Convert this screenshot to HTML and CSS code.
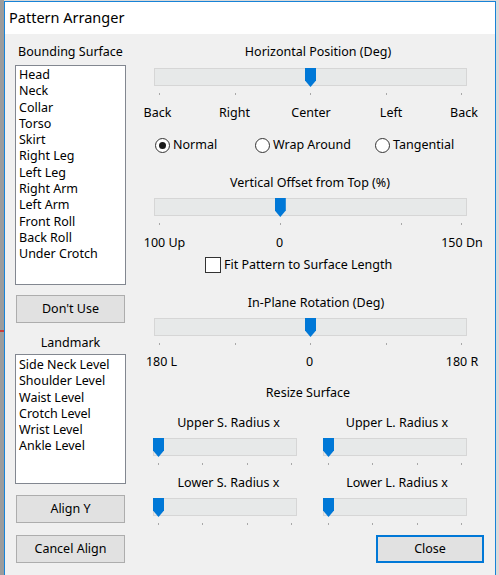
FILE: index.html
```html
<!DOCTYPE html>
<html>
<head>
<meta charset="utf-8">
<title>Pattern Arranger</title>
<link rel="stylesheet" href="styles.css">
</head>
<body>
<div class="window">
  <div class="titlebar">Pattern Arranger</div>
  <div class="content">
    <div class="left">
      <div class="cap cap-surface">Bounding Surface</div>
      <ul class="list list-surface">
        <li>Head</li>
        <li>Neck</li>
        <li>Collar</li>
        <li>Torso</li>
        <li>Skirt</li>
        <li>Right Leg</li>
        <li>Left Leg</li>
        <li>Right Arm</li>
        <li>Left Arm</li>
        <li>Front Roll</li>
        <li>Back Roll</li>
        <li>Under Crotch</li>
      </ul>
      <button class="btn btn-dontuse">Don't Use</button>
      <div class="cap cap-landmark">Landmark</div>
      <ul class="list list-landmark">
        <li>Side Neck Level</li>
        <li>Shoulder Level</li>
        <li>Waist Level</li>
        <li>Crotch Level</li>
        <li>Wrist Level</li>
        <li>Ankle Level</li>
      </ul>
      <button class="btn btn-align">Align Y</button>
      <button class="btn btn-cancel">Cancel Align</button>
    </div>

    <div class="right">
      <div class="title t-horiz">Horizontal Position (Deg)</div>
      <div class="slider big s-horiz" style="--p:0.5">
        <div class="track"></div>
        <div class="thumb"></div>
        <div class="ticks">
          <i style="--t:0"></i><i style="--t:0.25"></i><i style="--t:0.5"></i><i style="--t:0.75"></i><i style="--t:1"></i>
        </div>
      </div>
      <div class="scale sc-horiz">
        <span class="lbl">Back</span><span class="sp" style="flex-grow:0.251"></span>
        <span class="lbl">Right</span><span class="sp" style="flex-grow:0.250"></span>
        <span class="lbl">Center</span><span class="sp" style="flex-grow:0.261"></span>
        <span class="lbl">Left</span><span class="sp" style="flex-grow:0.238"></span>
        <span class="lbl">Back</span>
      </div>
      <div class="radios">
        <label class="radio"><span class="circle on"></span>Normal</label>
        <label class="radio"><span class="circle"></span>Wrap Around</label>
        <label class="radio"><span class="circle"></span>Tangential</label>
      </div>

      <div class="title t-vert">Vertical Offset from Top (%)</div>
      <div class="slider big s-vert" style="--p:0.4">
        <div class="track"></div>
        <div class="thumb"></div>
        <div class="ticks">
          <i style="--t:0"></i><i style="--t:0.4"></i><i style="--t:0.8"></i><i style="--t:1"></i>
        </div>
      </div>
      <div class="scale sc-vert">
        <span class="lbl">100 Up</span><span class="sp" style="flex-grow:0.3866"></span>
        <span class="lbl">0</span><span class="sp" style="flex-grow:0.6134"></span>
        <span class="lbl">150 Dn</span>
      </div>
      <label class="check"><span class="box"></span>Fit Pattern to Surface Length</label>

      <div class="title t-rot">In-Plane Rotation (Deg)</div>
      <div class="slider big s-rot" style="--p:0.5">
        <div class="track"></div>
        <div class="thumb"></div>
        <div class="ticks">
          <i style="--t:0"></i><i style="--t:0.25"></i><i style="--t:0.5"></i><i style="--t:0.75"></i><i style="--t:1"></i>
        </div>
      </div>
      <div class="scale sc-rot">
        <span class="lbl">180 L</span><span class="sp" style="flex-grow:0.4925"></span>
        <span class="lbl">0</span><span class="sp" style="flex-grow:0.5075"></span>
        <span class="lbl">180 R</span>
      </div>

      <div class="title t-resize">Resize Surface</div>
      <div class="pair pair-upper">
        <div class="cell">
          <div class="sub sub-s">Upper S. Radius x</div>
          <div class="slider small" style="--p:0">
            <div class="track"></div>
            <div class="thumb"></div>
            <div class="ticks"><i style="--t:0"></i><i style="--t:0.3333"></i><i style="--t:0.6667"></i><i style="--t:1"></i></div>
          </div>
        </div>
        <div class="cell">
          <div class="sub sub-l">Upper L. Radius x</div>
          <div class="slider small" style="--p:0">
            <div class="track"></div>
            <div class="thumb"></div>
            <div class="ticks"><i style="--t:0"></i><i style="--t:0.3333"></i><i style="--t:0.6667"></i><i style="--t:1"></i></div>
          </div>
        </div>
      </div>
      <div class="pair pair-lower">
        <div class="cell">
          <div class="sub sub-s">Lower S. Radius x</div>
          <div class="slider small" style="--p:0">
            <div class="track"></div>
            <div class="thumb"></div>
            <div class="ticks"><i style="--t:0"></i><i style="--t:0.3333"></i><i style="--t:0.6667"></i><i style="--t:1"></i></div>
          </div>
        </div>
        <div class="cell">
          <div class="sub sub-l">Lower L. Radius x</div>
          <div class="slider small" style="--p:0">
            <div class="track"></div>
            <div class="thumb"></div>
            <div class="ticks"><i style="--t:0"></i><i style="--t:0.3333"></i><i style="--t:0.6667"></i><i style="--t:1"></i></div>
          </div>
        </div>
      </div>
      <button class="btn btn-close">Close</button>
    </div>
  </div>
</div>
</body>
</html>
```

FILE: styles.css
```css
* { box-sizing: border-box; }

html, body {
  margin: 0;
  height: 575px;
  overflow: hidden;
}

body {
  padding: 1px 3px 0 4px;
  background:
    linear-gradient(#c9403c, #c9403c) 0 330px / 4px 2px no-repeat,
    linear-gradient(to right, #9c9c9c 0 4px, #dadada 4px);
  font-family: "Noto Sans", "Open Sans", sans-serif;
  font-size: 12.5px;
  color: #000;
}

.window {
  width: 492px;
  height: 580px;
  border: 1px solid #1883d7;
  background: #f0f0f0;
  display: flex;
  flex-direction: column;
}

.titlebar {
  height: 32px;
  flex: none;
  background: #fff;
  padding-left: 4px;
  font-size: 14.5px;
  line-height: 31px;
}

.content {
  display: flex;
  padding-left: 10px;
}

/* ---------- left column ---------- */
.left {
  width: 111px;
  display: flex;
  flex-direction: column;
}

.cap {
  line-height: 16px;
  height: 16px;
  text-align: center;
  white-space: nowrap;
}
.cap-surface { margin-top: 10px; }
.cap-landmark { margin-top: 12px; }

.list {
  list-style: none;
  margin: 0;
  padding: 1px 0 0 3px;
  background: #fff;
  border: 1px solid #828790;
  line-height: 16.3px;
  white-space: nowrap;
}
.list-surface { margin-top: 5px; height: 220px; }
.list-landmark { margin-top: 3px; height: 130px; padding-top: 2px; }

.btn {
  font: inherit;
  color: #000;
  background: #e1e1e1;
  border: 1px solid #adadad;
  height: 28px;
  padding: 0;
  line-height: 16px;
}
.left .btn { margin-left: 1px; width: 109px; }
.btn-dontuse { margin-top: 10px; }
.btn-align { margin-top: 11px; }
.btn-cancel { margin-top: 12px; }

/* ---------- right column ---------- */
.right {
  width: 332px;
  margin-left: 27px;
  display: flex;
  flex-direction: column;
}

.title {
  width: 314px;
  height: 16px;
  line-height: 16px;
  text-align: center;
  white-space: nowrap;
}
.t-horiz { margin-top: 10px; padding-left: 16px; }
.t-vert { margin-top: 22px; }
.t-rot { margin-top: 22px; padding-left: 12px; }
.t-resize { margin-top: 15px; padding-right: 4px; }

.slider {
  position: relative;
  height: 28px;
}
.slider.big {
  width: 313px;
  margin-left: 1px;
  margin-top: 8px;
}
.s-vert, .s-rot { margin-top: 7px !important; }

.track {
  height: 18px;
  background: #e7e9e9;
  border: 1px solid #d6d6d6;
}

.thumb {
  position: absolute;
  top: 0;
  left: calc(var(--p) * (100% - 11px));
  width: 11px;
  height: 19px;
  background: #0078d7;
  clip-path: polygon(0 0, 100% 0, 100% 66%, 50% 100%, 0 66%);
}

.ticks {
  position: relative;
  height: 2px;
  margin: 7px 6px 0 5px;
}
.ticks i {
  position: absolute;
  top: 0;
  left: calc(var(--t) * 100%);
  width: 1px;
  height: 2px;
  background: #a8a8a8;
}

.scale {
  display: flex;
  width: 314px;
  height: 16px;
  line-height: 16px;
  white-space: nowrap;
}
.scale .lbl {
  width: 0;
  display: flex;
  justify-content: center;
}
.sc-horiz { margin-top: 9px; padding: 0 3px 0 4.5px; }
.sc-vert { margin-top: 9px; padding: 0 5px 0 11.5px; }
.sc-rot { margin-top: 8px; padding: 0 5px 0 8.5px; }

.radios {
  margin-top: 16px;
  height: 16px;
  display: grid;
  grid-template-columns: 100px 120px auto;
  padding-left: 2px;
  line-height: 16px;
}
.radio {
  display: flex;
  align-items: center;
  gap: 3px;
  white-space: nowrap;
}
.circle {
  width: 15px;
  height: 15px;
  flex: none;
  border: 1px solid #333;
  border-radius: 50%;
  background: #fff;
  display: flex;
  align-items: center;
  justify-content: center;
}
.circle.on::after {
  content: "";
  width: 7px;
  height: 7px;
  border-radius: 50%;
  background: #1a1a1a;
}

.check {
  margin-top: 6px;
  margin-left: 52px;
  height: 16px;
  display: flex;
  align-items: center;
  gap: 3px;
  white-space: nowrap;
  line-height: 16px;
}
.box {
  width: 16px;
  height: 16px;
  flex: none;
  border: 1px solid #333;
  background: #fff;
}

.pair {
  width: 314px;
  display: grid;
  grid-template-columns: 144px 144px;
  column-gap: 26px;
}
.pair-upper { margin-top: 14px; }
.pair-lower { margin-top: 9px; }

.sub {
  height: 16px;
  line-height: 16px;
  text-align: center;
  white-space: nowrap;
}
.sub-s { padding-left: 7px; }
.sub-l { padding-left: 4px; }

.slider.small {
  margin-top: 7px;
}

.btn-close {
  align-self: flex-end;
  width: 108px;
  margin-top: 9px;
  margin-right: 1px;
  border: 2px solid #0078d7;
}
```
